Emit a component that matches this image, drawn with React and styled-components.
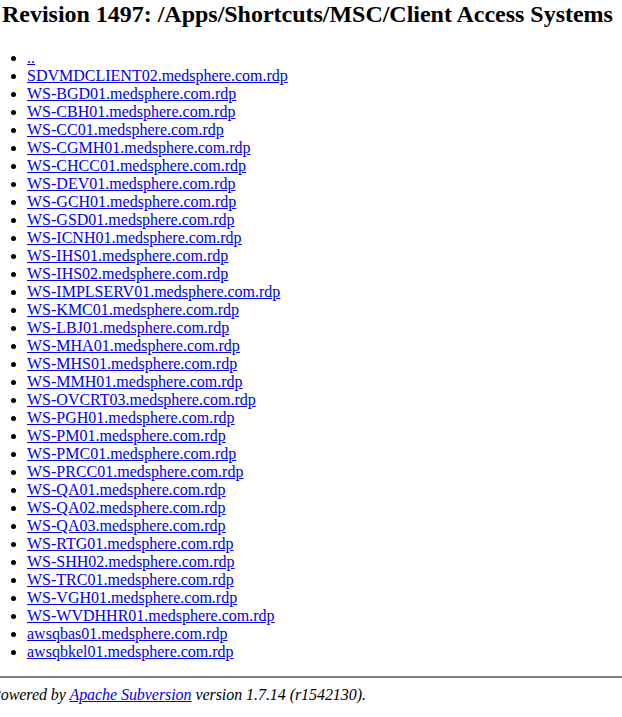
import React from "react";
import styled, { createGlobalStyle } from "styled-components";

const Global = createGlobalStyle`
  html, body { margin: 0; padding: 0; background: #fff; }
  body { font-family: "Liberation Serif", "Times New Roman", serif; color: #000; overflow: hidden; }
`;

const Page = styled.div`
  width: 622px;
  padding-top: 1px;
`;

const Title = styled.h2`
  margin: 0 0 21px 2px;
  font-size: 24px;
  line-height: 27px;
  font-weight: bold;
  white-space: nowrap;
  letter-spacing: -0.02px;
`;

const List = styled.ul`
  margin: 0 0 15px 0;
  padding: 0 0 0 27px;
  list-style: disc;
`;

const Item = styled.li`
  font-size: 16px;
  line-height: 18px;
`;

const Link = styled.a`
  color: #0000ee;
  text-decoration: underline;
`;

const Rule = styled.hr`
  margin: 0 0 8px 0;
  border: 0;
  height: 2px;
  background: #808080;
`;

const Footer = styled.em`
  display: block;
  margin-left: -9px;
  font-size: 16px;
  line-height: 18px;
  white-space: nowrap;
  letter-spacing: -0.06px;
`;

const files = [
  "..",
  "SDVMDCLIENT02.medsphere.com.rdp",
  "WS-BGD01.medsphere.com.rdp",
  "WS-CBH01.medsphere.com.rdp",
  "WS-CC01.medsphere.com.rdp",
  "WS-CGMH01.medsphere.com.rdp",
  "WS-CHCC01.medsphere.com.rdp",
  "WS-DEV01.medsphere.com.rdp",
  "WS-GCH01.medsphere.com.rdp",
  "WS-GSD01.medsphere.com.rdp",
  "WS-ICNH01.medsphere.com.rdp",
  "WS-IHS01.medsphere.com.rdp",
  "WS-IHS02.medsphere.com.rdp",
  "WS-IMPLSERV01.medsphere.com.rdp",
  "WS-KMC01.medsphere.com.rdp",
  "WS-LBJ01.medsphere.com.rdp",
  "WS-MHA01.medsphere.com.rdp",
  "WS-MHS01.medsphere.com.rdp",
  "WS-MMH01.medsphere.com.rdp",
  "WS-OVCRT03.medsphere.com.rdp",
  "WS-PGH01.medsphere.com.rdp",
  "WS-PM01.medsphere.com.rdp",
  "WS-PMC01.medsphere.com.rdp",
  "WS-PRCC01.medsphere.com.rdp",
  "WS-QA01.medsphere.com.rdp",
  "WS-QA02.medsphere.com.rdp",
  "WS-QA03.medsphere.com.rdp",
  "WS-RTG01.medsphere.com.rdp",
  "WS-SHH02.medsphere.com.rdp",
  "WS-TRC01.medsphere.com.rdp",
  "WS-VGH01.medsphere.com.rdp",
  "WS-WVDHHR01.medsphere.com.rdp",
  "awsqbas01.medsphere.com.rdp",
  "awsqbkel01.medsphere.com.rdp",
];

export default function App() {
  return (
    <Page>
      <Global />
      <Title>Revision 1497: /Apps/Shortcuts/MSC/Client Access Systems</Title>
      <List>
        {files.map((f) => (
          <Item key={f}>
            <Link href={f === ".." ? "../" : f}>{f}</Link>
          </Item>
        ))}
      </List>
      <Rule />
      <Footer>
        Powered by <Link href="http://subversion.apache.org/">Apache Subversion</Link> version 1.7.14 (r1542130).
      </Footer>
    </Page>
  );
}
